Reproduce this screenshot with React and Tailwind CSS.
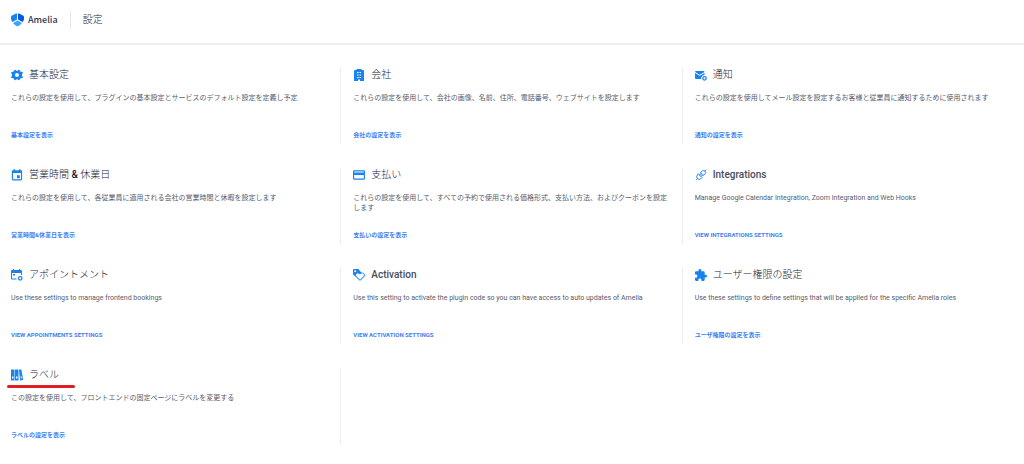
import React from "react";
import { MdEvent, MdExtension, MdPayment } from "react-icons/md";

const iconClass = "w-3 h-3 shrink-0 text-[#1a84ee]";

function GearIcon() {
  return (
    <svg viewBox="0 0 24 24" fill="currentColor" className={iconClass}>
      <path
        fillRule="evenodd"
        d="M8.2 1.5a2 2 0 0 1 2 1.4q1.8.9 3.6 0a2 2 0 0 1 2-1.4 2 2 0 0 1 1.6.9l1.8 3 3.6.6a2 2 0 0 1 .6 2.6q-1.6 2.4-1.6 3.4t1.6 3.4a2 2 0 0 1-.6 2.6l-3.6.6-1.8 3a2 2 0 0 1-1.6.9 2 2 0 0 1-2-1.4q-1.8-.9-3.6 0a2 2 0 0 1-2 1.4 2 2 0 0 1-1.6-.9l-1.8-3-3.6-.6a2 2 0 0 1-.6-2.6Q2.200 13 2.200 12T.6 8.600a2 2 0 0 1 .6-2.600l3.600-.6 1.800-3a2 2 0 0 1 1.600-.9ZM12 8a4 4 0 1 0 0 8 4 4 0 0 0 0-8Z"
      />
    </svg>
  );
}

function BuildingIcon() {
  return (
    <svg viewBox="0 0 24 24" fill="currentColor" className={iconClass}>
      <path
        fillRule="evenodd"
        d="M7 0h10v2h3q2 0 2 2v20h-8v-3h-4v3H2V4q0-2 2-2h3ZM8 6v2h2V6Zm3 0v2h2V6Zm3 0v2h2V6Zm-6 5v2h2v-2Zm3 0v2h2v-2Zm3 0v2h2v-2Zm-6 5v2h2v-2Zm3 0v2h2v-2Zm3 0v2h2v-2Z"
      />
    </svg>
  );
}

function MailIcon() {
  return (
    <svg viewBox="0 0 24 24" fill="currentColor" className={iconClass}>
      <path d="M2 4h15q2 0 2 2l-9.500 5.500L0 6q0-2 2-2Z" />
      <path d="M0 8l9.500 5.500L19 8v4q-6 0-7 8H2q-2 0-2-2Z" />
      <circle cx="19" cy="18.500" r="3.500" fill="none" stroke="currentColor" strokeWidth="2.500" />
    </svg>
  );
}

function PlugIcon() {
  return (
    <svg
      viewBox="0 0 24 24"
      fill="none"
      stroke="currentColor"
      strokeWidth="1.800"
      strokeLinejoin="round"
      strokeLinecap="round"
      className={iconClass}
    >
      <g transform="rotate(45 12 12)">
        <path d="M8 9V4q0-3 4-3t4 3v5Z" />
        <path d="M7 14h10v4q0 4-5 4t-5-4Z" />
        <path d="M10 9v5M14 9v5M12 1v-3M12 22v3" />
      </g>
    </svg>
  );
}

function AppointmentIcon() {
  return (
    <svg viewBox="0 0 24 24" fill="currentColor" className={iconClass}>
      <path d="M2 2h2V0h2v2h10V0h2v2h2q2 0 2 2v8h-2V8H2v11h9v2H2q-2 0-2-2V4q0-2 2-2Z" />
      <path d="M4 10h4v3H4Z" />
      <circle cx="18.500" cy="18.500" r="3.500" fill="none" stroke="currentColor" strokeWidth="2.500" />
    </svg>
  );
}

function ActivationIcon() {
  return (
    <svg viewBox="0 0 24 24" fill="currentColor" className={iconClass}>
      <path
        fillRule="evenodd"
        d="M2 0h9l3 4q2 3 4 3 3 0 5 3 2 4-1 6l-6 6q-2 2-4 0l-6-6Q4 14 1 12 0 11 0 9V2Q0 0 2 0ZM4.500 2.500a2 2 0 1 0 0 4 2 2 0 0 0 0-4ZM14 21.500l7-7q2-3-.5-5t-5 0L14 11l-2-1.500q-3-2-5 .5t.5 5Z"
      />
    </svg>
  );
}

function LabelsIcon() {
  return (
    <svg viewBox="0 0 24 24" fill="currentColor" className={iconClass}>
      <path
        fillRule="evenodd"
        d="M1 1h5q1 0 1 1v20q0 1-1 1H1q-1 0-1-1V2q0-1 1-1Zm1 14v4h3v-4ZM9 1h5q1 0 1 1v20q0 1-1 1H9q-1 0-1-1V2q0-1 1-1Zm1 14v4h3v-4ZM16 2q0-1 1-1h3q1 0 1 1l3 19q0 1-1 1l-4 1q-1 0-1-1Zm3 13 .5 4 2-.5-.5-4Z"
      />
    </svg>
  );
}

const settings = [
  {
    icon: <GearIcon />,
    title: "基本設定",
    desc: "これらの設定を使用して、プラグインの基本設定とサービスのデフォルト設定を定義し予定",
    link: "基本設定を表示",
  },
  {
    icon: <BuildingIcon />,
    title: "会社",
    desc: "これらの設定を使用して、会社の画像、名前、住所、電話番号、ウェブサイトを設定します",
    link: "会社の設定を表示",
  },
  {
    icon: <MailIcon />,
    title: "通知",
    desc: "これらの設定を使用してメール設定を設定するお客様と従業員に通知するために使用されます",
    link: "通知の設定を表示",
  },
  {
    icon: <MdEvent className={iconClass} viewBox="2 1 20 21" />,
    title: (
      <>
        営業時間 <span className="font-medium">&amp;</span> 休業日
      </>
    ),
    desc: "これらの設定を使用して、各従業員に適用される会社の営業時間と休暇を設定します",
    link: "営業時間&休業日を表示",
  },
  {
    icon: <MdPayment className={iconClass} viewBox="2 2 20 20" />,
    title: "支払い",
    desc: "これらの設定を使用して、すべての予約で使用される価格形式、支払い方法、およびクーポンを設定します",
    link: "支払いの設定を表示",
  },
  {
    icon: <PlugIcon />,
    title: <span className="font-medium text-[#454c5c]">Integrations</span>,
    desc: "Manage Google Calendar Integration, Zoom Integration and Web Hooks",
    link: "VIEW INTEGRATIONS SETTINGS",
  },
  {
    icon: <AppointmentIcon />,
    title: "アポイントメント",
    desc: "Use these settings to manage frontend bookings",
    link: "VIEW APPOINTMENTS SETTINGS",
  },
  {
    icon: <ActivationIcon />,
    title: <span className="font-medium text-[#454c5c]">Activation</span>,
    desc: "Use this setting to activate the plugin code so you can have access to auto updates of Amelia",
    link: "VIEW ACTIVATION SETTINGS",
  },
  {
    icon: <MdExtension className={iconClass} viewBox="2 1 21 21" />,
    title: "ユーザー権限の設定",
    desc: "Use these settings to define settings that will be applied for the specific Amelia roles",
    link: "ユーザ権限の設定を表示",
  },
  {
    icon: <LabelsIcon />,
    title: "ラベル",
    desc: "この設定を使用して、フロントエンドの固定ページにラベルを変更する",
    link: "ラベルの設定を表示",
    marked: true,
  },
];

// left padding and divider depend on the column
const columnClass = [
  "pl-[11px] border-[#eceef3]",
  "pl-3 border-[#eceef3]",
  "pl-3 border-transparent",
];

function SettingCard({ item, column }) {
  return (
    <section
      className={`${columnClass[column]} border-r min-h-[76px] pr-3 flex flex-col items-start`}
    >
      <div className="relative flex items-center gap-1.5 h-[14px]">
        {item.icon}
        <h2 className="text-[10px] leading-[14px] font-light text-[#1c2233]">
          {item.title}
        </h2>
        {item.marked && (
          <span className="absolute -left-1 -right-4 top-[17px] h-[3px] rounded-full bg-[#e11d24]"></span>
        )}
      </div>
      <p className="mt-[11px] text-[7px] leading-[10px] text-[#565d6d]">
        {item.desc}
      </p>
      <a
        href="#"
        className="mt-auto mb-1 text-[6px] leading-[10px] font-bold text-[#3f80f2]"
      >
        {item.link}
      </a>
    </section>
  );
}

function App() {
  return (
    <div
      lang="ja"
      className="min-h-screen bg-white font-['Roboto','Noto_Sans_CJK_JP',sans-serif]"
    >
      <header className="h-[45px] pl-[11px] pb-1 flex items-center border-b-2 border-[#eceef4]">
        <svg viewBox="0 0 26 28" className="w-[13px] h-[14px]">
          <path d="M12 1v12L3 18Q0 15 0 11V8q0-2 2-3l8-4Z" fill="#1a84ee" />
          <path d="M14 1v12l9 5q3-3 3-7V8q0-2-2-3l-8-4Z" fill="#005aee" />
          <path d="M13 15l9 5q-3 4-7 6-2 1-4 0-4-2-7-6Z" fill="#3ba6ff" />
        </svg>
        <span className="ml-1 text-[9px] font-medium text-[#2c3850] font-['Noto_Sans_CJK_JP',sans-serif]">
          Amelia
        </span>
        <span className="ml-3 w-px h-[18px] bg-[#e6e8ee]"></span>
        <h1 className="ml-3 text-[10px] font-light text-[#1c2233]">設定</h1>
      </header>

      <main className="mt-[23px] grid grid-cols-3 gap-y-6">
        {settings.map((item, index) => (
          <SettingCard key={item.link} item={item} column={index % 3} />
        ))}
      </main>
    </div>
  );
}

export default App;
